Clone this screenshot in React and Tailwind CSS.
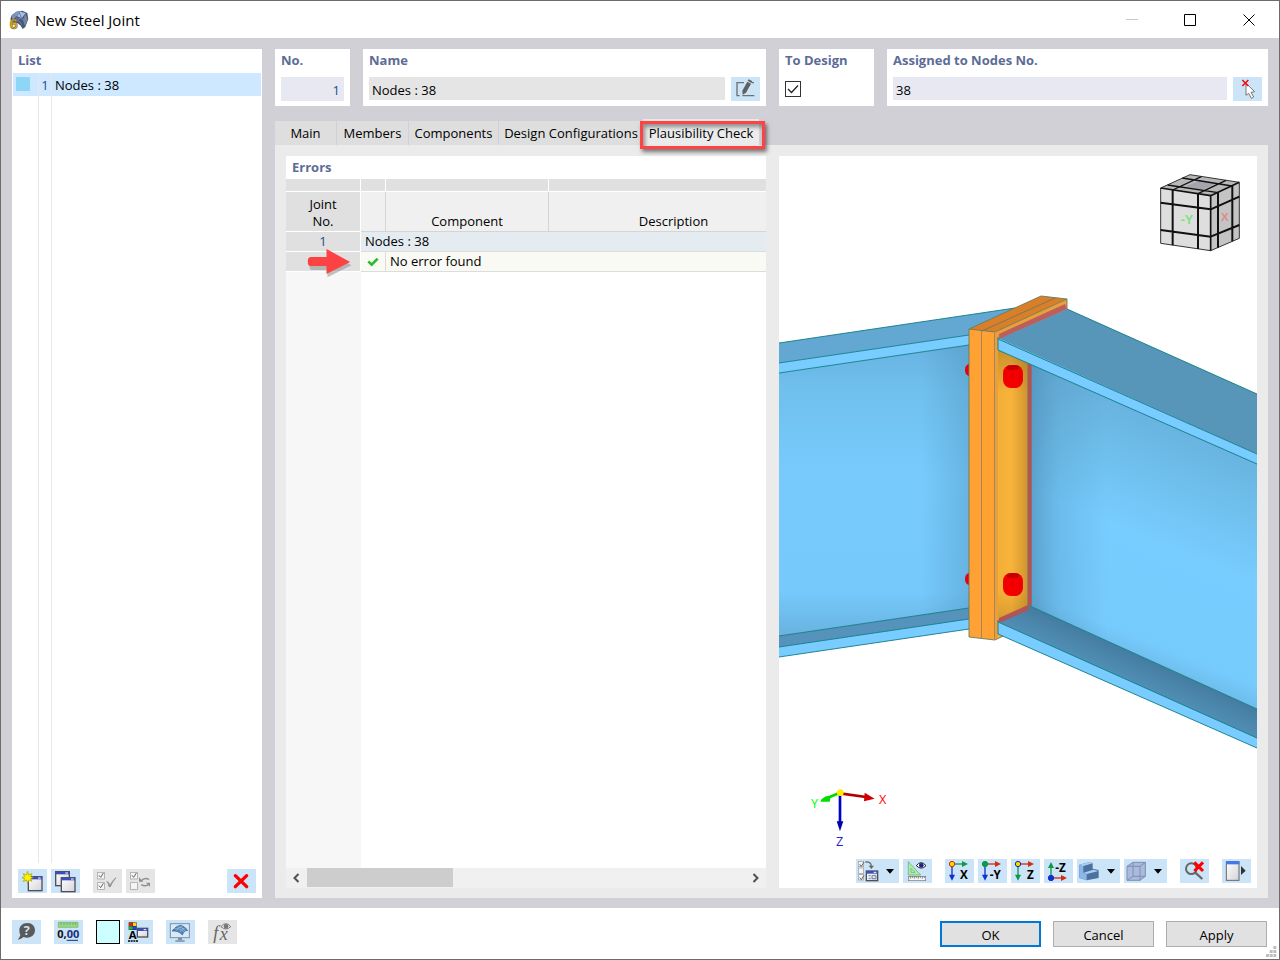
import { useState } from "react";

const tabs = [
  { name: "Main", width: "w-[62px]" },
  { name: "Members", width: "w-[72px]" },
  { name: "Components", width: "w-[90px]" },
  { name: "Design Configurations", width: "w-[144px]" },
  { name: "Plausibility Check", width: "w-[116px]" },
];

function Icon({ children, wide }) {
  return (
    <svg viewBox={wide ? "0 0 129 72" : "0 0 87 72"} className={wide ? "block w-[43px] h-6" : "block w-[29px] h-6"} fill="none" aria-hidden="true">
      {children}
      {wide && <path d="M90 30h24l-12 14z" fill="#000" />}
    </svg>
  );
}

function IconButton({ label, wide, disabled, children }) {
  return (
    <button type="button" title={label} aria-label={label} disabled={disabled} className={`shrink-0 ${disabled ? "bg-[#e5e5e5]" : "bg-[#cce4f7]"}`}>
      <Icon wide={wide}>{children}</Icon>
    </button>
  );
}

function MiniWindow({ x, y, w = 41, h = 42 }) {
  return (
    <g>
      <rect x={x} y={y} width={w} height={h} fill="url(#paper)" stroke="#505058" strokeWidth="4" />
      <rect x={x} y={y} width={w} height="8" fill="#3c4fb8" />
      <path d={`M${x + w - 12} ${y + 4}h8`} stroke="#fff" strokeWidth="3" />
    </g>
  );
}

function TickBox({ x, y, checked, size = 20 }) {
  return (
    <g stroke="#9a9a9a" strokeWidth="3">
      <rect x={x} y={y} width={size} height={size} fill="#f4f4f4" strokeWidth="2" />
      {checked && <path d={`M${x + 4} ${y + 9}l5 6 8-13`} stroke="#666" strokeWidth="3" />}
    </g>
  );
}

function Axes({ ox, oy, right, down, up, label, dot }) {
  return (
    <g>
      <path d={`M${ox} ${oy}h34`} stroke={right} strokeWidth="4" />
      <path d={`M${ox + 30} ${oy - 9}l18 9-18 9z`} fill={right} />
      <path d={up ? `M${ox} ${oy}v-34` : `M${ox} ${oy}v34`} stroke={down} strokeWidth="4" />
      <path d={up ? `M${ox - 9} ${oy - 30}l9-18 9 18z` : `M${ox - 9} ${oy + 32}l9 18 9-18z`} fill={down} />
      <circle cx={ox} cy={oy} r="8" fill={dot} stroke={dot === "#ffd800" ? (down === "#0a9a4a" ? "#1030d0" : "#d03010") : dot} strokeWidth="3" />
      <text x={up ? 34 : 68} y={up ? 40 : 59} textAnchor={up ? "start" : "end"} fontSize="35" fontWeight="bold" fill="#000" fontFamily="Open Sans">{label}</text>
    </g>
  );
}

function AppLogo() {
  return (
    <svg viewBox="0 0 60 60" className="w-5 h-5 overflow-visible" aria-hidden="true">
      <path d="M8 16L22 5l18-3 15 7 3 18-9 24-8 6-6-10-10-8-16-2-5-10z" fill="#48587a" />
      <path d="M8 16L22 5l16-2-14 14-13 12z" fill="#8298c2" />
      <path d="M34 5l16 4-12 16-14-6z" fill="#a9bde0" />
      <path d="M14 14l12 14 14-5M30 6l10 24 12-9M26 28l12 16" stroke="#6a81b0" strokeWidth="3" fill="none" />
      <path d="M49 11l7 16-8 22-6-19z" fill="#77849e" />
      <text x="2" y="56" fontSize="43" fontWeight="bold" fill="#dcb52a" stroke="#8b7012" strokeWidth="2" fontFamily="Liberation Sans">6</text>
    </svg>
  );
}

function TitleBar() {
  return (
    <header className="h-[37px] pl-2 flex items-center bg-white">
      <AppLogo />
      <h1 className="pl-[6px] text-[15px] leading-5 flex-1">New Steel Joint</h1>
      <button type="button" aria-label="Minimize" disabled className="w-[58px] h-9 flex items-center justify-center">
        <svg viewBox="0 0 12 12" className="w-3 h-3"><path d="M0 5.500h12" stroke="#c9c9c9" /></svg>
      </button>
      <button type="button" aria-label="Maximize" className="w-[58px] h-9 flex items-center justify-center">
        <svg viewBox="0 0 12 12" className="w-3 h-3"><path d="M.5.5h11v11H.5z" fill="none" stroke="#000" /></svg>
      </button>
      <button type="button" aria-label="Close" className="w-[60px] h-9 flex items-center justify-center">
        <svg viewBox="0 0 12 12" className="w-3 h-3"><path d="M.5.5l11 11M11.5.5l-11 11" stroke="#000" /></svg>
      </button>
    </header>
  );
}

function ListPanel() {
  return (
    <section className="w-[250px] shrink-0 bg-white flex flex-col">
      <h2 className="h-6 px-[6px] leading-[22px] font-bold text-[#5d6c96]">List</h2>
      <div className="flex-1 px-px flex flex-col">
        <div className="h-[23px] flex bg-[#cde8ff] leading-6">
          <span className="w-[26px] border-r border-[#e8e8e8] pl-[3px] pt-1"><span className="block w-[14px] h-[14px] bg-[#8ed6f5]" /></span>
          <span className="w-[13px] border-r border-[#e8e8e8] text-center text-[#1d4f86]">1</span>
          <span className="pl-[3px]">Nodes : 38</span>
        </div>
        <div className="flex-1 flex">
          <div className="w-[26px] border-r border-[#e8e8e8]" />
          <div className="w-[13px] border-r border-[#e8e8e8]" />
        </div>
      </div>
      <div className="flex px-[6px] pt-[6px] pb-[5px]">
        <div className="flex gap-1">
          <IconButton label="New">
            <MiniWindow x={31} y={23} />
            <path d="M29 7l3 11 10-4-4 9 8 2-8 4 4 8-9-4-4 9-4-9-9 5 4-9-8-3 8-3-4-9 9 4z" fill="#fff200" stroke="#a89a00" strokeWidth="2" />
          </IconButton>
          <IconButton label="Copy">
            <MiniWindow x={14} y={8} />
            <MiniWindow x={31} y={26} />
          </IconButton>
        </div>
        <div className="flex gap-1 ml-[13px] flex-1">
          <IconButton label="Select all" disabled>
            <TickBox x={14} y={10} checked />
            <TickBox x={14} y={41} checked />
            <path d="M41 37q8 3 10 12 5-13 18-23-12 15-17 27h-4q-1-9-7-16z" fill="#8e8e8e" stroke="#8e8e8e" strokeWidth="2" />
          </IconButton>
          <IconButton label="Invert selection" disabled>
            <TickBox x={14} y={10} checked />
            <TickBox x={14} y={41} />
            <path d="M45 36q10-12 24-5M70 44q-11 11-24 3" stroke="#8e8e8e" strokeWidth="4" />
            <path d="M39 25v13h13zM72 53V41H60z" fill="#8e8e8e" />
          </IconButton>
        </div>
        <IconButton label="Delete">
          <path d="M25 20l34 33M59 20L25 53" stroke="#f00" strokeWidth="10" strokeLinecap="round" />
        </IconButton>
      </div>
    </section>
  );
}

function Field({ label, id, className, children }) {
  return (
    <div className={`bg-white h-[57px] px-[6px] pb-[5px] flex flex-col ${className}`}>
      <label htmlFor={id} className="h-7 leading-[22px] font-bold text-[#5d6c96] whitespace-nowrap">{label}</label>
      <div className="flex items-start gap-[6px]">{children}</div>
    </div>
  );
}

function TopFields() {
  const [toDesign, setToDesign] = useState(true);
  return (
    <div className="grid grid-cols-[491fr_489fr] gap-[13px]">
      <div className="flex gap-[13px] min-w-0">
        <Field label="No." id="no" className="w-[75px]">
          <input id="no" type="text" defaultValue="1" className="w-full h-6 px-1 pt-[2px] text-right bg-[#e8e8f2] text-[#1d4f86]" />
        </Field>
        <Field label="Name" id="name" className="flex-1 min-w-0">
          <input id="name" type="text" readOnly value="Nodes : 38" className="flex-1 min-w-0 h-[23px] px-[3px] pt-[2px] bg-[#e5e5e5]" />
          <IconButton label="Edit name">
            <path d="M39 17H18v39h8M34 56h36M62 17h7" stroke="#707070" strokeWidth="4" />
            <path d="M34 41l15-27 11 6-15 27-10 6z" fill="#5f5f5f" />
            <path d="M50 11l3-4 11 6-3 5z" fill="#5f5f5f" />
          </IconButton>
        </Field>
      </div>
      <div className="flex gap-[13px] min-w-0">
        <Field label="To Design" id="to-design" className="w-[95px]">
          <span className="mt-1 grid">
            <input id="to-design" type="checkbox" checked={toDesign} onChange={(e) => setToDesign(e.target.checked)} className="appearance-none col-start-1 row-start-1 w-4 h-4 border border-[#333] bg-white" />
            {toDesign && (
              <svg viewBox="0 0 16 16" className="col-start-1 row-start-1 w-4 h-4 pointer-events-none"><path d="M3 8l3.500 3.500L13 4.500" fill="none" stroke="#222" strokeWidth="1.300" /></svg>
            )}
          </span>
        </Field>
        <Field label="Assigned to Nodes No." id="assigned" className="flex-1 min-w-0">
          <input id="assigned" type="text" defaultValue="38" className="flex-1 min-w-0 h-[23px] px-[3px] pt-[2px] bg-[#e8e8f2]" />
          <IconButton label="Select nodes in graphic">
            <path d="M39 19v36l8-6 8 15 7-4-8-14 11-2z" fill="#fff" stroke="#777" strokeWidth="3" />
            <path d="M28 9l18 18M46 9L28 27" stroke="#e11" strokeWidth="5" />
          </IconButton>
        </Field>
      </div>
    </div>
  );
}

function TabBar({ active, onSelect }) {
  return (
    <div role="tablist" className="relative flex items-end h-[26px] mt-[13px] w-fit">
      {tabs.map((tab, i) => (
        <button
          key={tab.name}
          type="button"
          role="tab"
          aria-selected={active === tab.name}
          onClick={() => onSelect(tab.name)}
          className={`whitespace-nowrap ${tab.width} ${active === tab.name ? "h-[26px] bg-[#ebebeb] pt-1" : "h-6 bg-[#dedede] pt-[2px]"} ${i < 3 ? "border-r border-[#d1d0d6]" : ""}`}
        >
          {tab.name}
        </button>
      ))}
      {/* highlight frame around the check tab */}
      <div className="absolute left-[365px] top-[2px] w-[125px] h-7 border-[3px] border-[#ff4242] shadow-[2px_3px_4px_rgba(0,0,0,0.5),inset_2px_3px_4px_rgba(0,0,0,0.4)] pointer-events-none" />
    </div>
  );
}

function ErrorsPanel() {
  return (
    <section className="bg-white min-w-0 flex flex-col">
      <h2 className="h-[23px] px-[6px] leading-[23px] font-bold text-[#5d6c96]">Errors</h2>
      <div className="flex-1 flex flex-col bg-[linear-gradient(to_right,#f7f7f7_75px,#fff_75px)]">
        <table className="w-full table-fixed border-separate border-spacing-0">
          <colgroup>
            <col className="w-[75px]" />
            <col className="w-[25px]" />
            <col className="w-[163px]" />
            <col />
          </colgroup>
          <thead>
            <tr className="h-[13px] bg-[#e0e0e0]" aria-hidden="true">
              <td className="p-0 border-r border-b border-white" />
              <td className="p-0 border-r border-b border-white" />
              <td className="p-0 border-r border-b border-white" />
              <td className="p-0 border-b border-white" />
            </tr>
            <tr className="h-10 align-bottom bg-[#f0f0f0] leading-[17px]">
              <th scope="col" className="font-normal p-0 pb-px bg-[#e0e0e0] border-r border-b border-white">Joint<br />No.</th>
              <th scope="col" aria-label="Status" className="p-0 border-r border-b border-[#d5d5d5]" />
              <th scope="col" className="font-normal p-0 pb-px border-r border-b border-[#d5d5d5]">Component</th>
              <th scope="col" className="font-normal p-0 pb-px border-b border-[#d5d5d5]"><span className="pl-8">Description</span></th>
            </tr>
          </thead>
          <tbody className="leading-[19px]">
            <tr className="h-5 bg-[#e4ecf2]">
              <td className="p-0 text-center text-[#1d4f86] bg-[#e0e0e0] border-r border-b border-white">1</td>
              <td colSpan="3" className="p-0 pl-1 border-b border-[#dcdcdc]">Nodes : 38</td>
            </tr>
            <tr className="h-5 bg-[#f9faf4]">
              <td className="p-0 bg-[#e0e0e0] border-r border-b border-white">
                <div className="relative">
                  <svg viewBox="0 0 140 96" className="absolute left-5 -top-[14px] w-[47px] h-8">
                    <path d="M10 44q0-10 10-10h44V13l72 39-72 36V66H20q-10 0-10-10z" fill="#888" opacity=".5" />
                    <path d="M5 38q0-11 10-11h46V3l71 39-71 36V54H15Q5 54 5 44z" fill="#fc4242" />
                  </svg>
                </div>
              </td>
              <td className="p-0 border-r border-b border-[#dcdcdc]">
                <svg viewBox="0 0 36 30" className="mx-auto w-3 h-[10px]" role="img" aria-label="OK"><path d="M4 13l10 10L32 5" fill="none" stroke="#2fb82f" strokeWidth="8" /></svg>
              </td>
              <td colSpan="2" className="p-0 pl-1 border-b border-[#dcdcdc]">No error found</td>
            </tr>
          </tbody>
        </table>
      </div>
      <div className="h-5 bg-[#f0f0f0] flex">
        <button type="button" aria-label="Scroll left" className="w-[21px] h-5 flex items-center justify-center">
          <svg viewBox="0 0 8 10" className="w-2 h-[10px]"><path d="M5.500 1l-4 4 4 4" fill="none" stroke="#505050" strokeWidth="2" /></svg>
        </button>
        <div className="flex-1 h-[19px]"><div className="w-1/3 h-full bg-[#cdcdcd]" /></div>
        <button type="button" aria-label="Scroll right" className="w-[21px] h-5 flex items-center justify-center">
          <svg viewBox="0 0 8 10" className="w-2 h-[10px]"><path d="M1.500 1l4 4-4 4" fill="none" stroke="#505050" strokeWidth="2" /></svg>
        </button>
      </div>
    </section>
  );
}

function JointModel() {
  return (
    <svg viewBox="779 156 478 732" preserveAspectRatio="xMidYMid slice" className="absolute inset-0 w-full h-full" role="img" aria-label="Steel joint model">
      <defs>
        <linearGradient id="webLeft" x1="0" y1="0" x2="0" y2="1">
          <stop offset="0" stopColor="#68b2e0" /><stop offset=".16" stopColor="#70c0ee" /><stop offset=".45" stopColor="#77cbfc" />
          <stop offset=".85" stopColor="#75c9fb" /><stop offset="1" stopColor="#68b2e0" />
        </linearGradient>
        <linearGradient id="fadeLeft" x1="0" y1="0" x2="1" y2="0">
          <stop offset=".75" stopColor="#4b8ab2" stopOpacity="0" /><stop offset="1" stopColor="#4b8ab2" stopOpacity=".35" />
        </linearGradient>
        <linearGradient id="webRight" gradientUnits="userSpaceOnUse" x1="1160" y1="415" x2="1070" y2="635">
          <stop offset="0" stopColor="#68b2de" /><stop offset=".25" stopColor="#70c0ed" /><stop offset=".5" stopColor="#77cdff" /><stop offset=".9" stopColor="#76cbfd" /><stop offset="1" stopColor="#6ebbe9" />
        </linearGradient>
        <linearGradient id="fadeRight" x1="0" y1="0" x2="1" y2="0">
          <stop offset="0" stopColor="#4685ad" stopOpacity=".6" /><stop offset=".13" stopColor="#4b8ab2" stopOpacity=".25" /><stop offset=".34" stopColor="#4b8ab2" stopOpacity="0" />
        </linearGradient>
        <linearGradient id="lowerFlange" gradientUnits="userSpaceOnUse" x1="1140" y1="654" x2="1126" y2="685">
          <stop offset="0" stopColor="#447ba0" /><stop offset="1" stopColor="#5392b8" />
        </linearGradient>
        <linearGradient id="plateFace" x1="0" y1="0" x2="1" y2="0">
          <stop offset="0" stopColor="#f3ae38" /><stop offset=".45" stopColor="#f8b33b" /><stop offset="1" stopColor="#c98f2c" />
        </linearGradient>
        <linearGradient id="plateShade" x1="0" y1="0" x2="0" y2="1">
          <stop offset="0" stopColor="#8a6417" stopOpacity=".55" /><stop offset=".2" stopColor="#8a6417" stopOpacity="0" /><stop offset=".88" stopColor="#8a6417" stopOpacity="0" /><stop offset="1" stopColor="#8a6417" stopOpacity=".35" />
        </linearGradient>
      </defs>

      {/* left beam */}
      <path d="M779 373l190-28v263l-190 28z" fill="url(#webLeft)" />
      <path d="M779 373l190-28v263l-190 28z" fill="url(#fadeLeft)" />
      <path d="M779 343l236-35-20 24-26 3-190 28z" fill="#62a8d3" />
      <path d="M779 363l190-28v10l-190 28zM779 647l190-28v10l-190 28z" fill="#78ccff" />
      <path d="M779 636l190-28v11l-190 28z" fill="#5593bc" />
      <path d="M779 343l236-35M779 363l190-28M779 373l190-28M779 636l190-28M779 647l190-28M779 657l190-28" fill="none" stroke="#0f7c85" strokeWidth=".9" />
      <path d="M969 364q-4 1-4 6t4 6zM969 573q-4 1-4 6t4 6z" fill="#e60010" />

      {/* right beam web */}
      <path d="M1030 358l227 105v246l-227-103z" fill="url(#webRight)" />
      <path d="M1030 358l227 105v246l-227-103z" fill="url(#fadeRight)" />

      {/* end plates */}
      <path d="M995 332l36-5v279l-27 30-9 4z" fill="url(#plateFace)" />
      <path d="M995 340l36-5v271l-36 20z" fill="url(#plateShade)" />
      <path d="M1028 350h4v255l-4 2z" fill="#b0545a" />
      <path d="M1031.500 360v246M1027.500 360v246" stroke="#8a7a60" strokeWidth=".7" />
      <path d="M969 329l26 3v308l-26-3z" fill="#ffa233" />
      <path d="M969 329l72-33 26 3-72 33z" fill="#da7f28" />
      <path d="M995 332l72-33v11l-69 31v296l-3 3z" fill="#e9a036" />
      <path d="M981.500 331v307M994.500 333v306" stroke="#a58463" strokeWidth="1" />
      <path d="M982 331l73-33M969 329v308l26 3 8-4M969 329l72-33 26 3v10M969 329l26 3 72-33" fill="none" stroke="#687c60" strokeWidth=".9" />

      {/* right beam flanges and welds */}
      <path d="M998 339l69-30 190 85v60z" fill="#5795b9" />
      <path d="M998 622l32-16 227 103v30z" fill="url(#lowerFlange)" />
      <path d="M998 338l259 116v10L998 350zM998 622l259 116v10L998 634z" fill="#78ccff" />
      <path d="M1067 309l190 85M998 339l259 115M998 350l259 114M998 622l259 116M998 634l259 114M1030 606l227 103M998 337v13M998 620v14" fill="none" stroke="#0f7c85" strokeWidth=".9" />
      <path d="M999 334l66-30 2 5-68 30z" fill="#bd5e5e" />
      <path d="M999 618l29-13 1 5-30 13z" fill="#b0545a" />

      <g id="bolt">
        <rect x="1003" y="365" width="20" height="23" rx="8" fill="#f40000" />
        <path d="M1007 366q6-2 12 0v3q-6 2-12 0z" fill="#c40000" />
        <path d="M1006 371v11M1012 373v6M1020 371v11" stroke="#d40000" strokeWidth="1" />
      </g>
      <use href="#bolt" y="208" />

      {/* view cube */}
      <g transform="translate(1140 160) scale(.3333)" strokeLinejoin="round">
        <path d="M62 84l150 23v165L62 250z" fill="#dedede" />
        <path d="M212 107l86-40v168l-86 37z" fill="#c4c4c4" />
        <path d="M62 84l88-40 148 23-86 40z" fill="#b8b8b8" />
        <path d="M137 79l42-16 48 8-42 19z" fill="#a5a5ae" />
        <path d="M62 84v166l150 22 86-37V67L150 44z" fill="none" stroke="#333" strokeWidth="3" />
        <path d="M62 84l150 23v165M212 107l86-40" fill="none" stroke="#111" strokeWidth="5" />
        <path d="M98 90v166M174 101v166M62 128l150 20M62 210l150 20M212 148l86-38M212 230l86-35M234 97v166M277 77v167" fill="none" stroke="#111" strokeWidth="6" />
        <path d="M83 75l151 23M127 54l149 24M98 90l86-40M174 101l84-40" fill="none" stroke="#111" strokeWidth="4" />
        <text x="122" y="193" fontSize="38" fontWeight="bold" fill="#7fe27f" fontFamily="Liberation Sans">-Y</text>
        <text x="243" y="184" fontSize="34" fontWeight="bold" fill="#e08a8a" fontFamily="Liberation Sans">X</text>
      </g>

      {/* global axes */}
      <g transform="translate(790 770) scale(.3333)" fontFamily="Open Sans" fontSize="38">
        <path d="M150 70l78 11" stroke="#b00000" strokeWidth="8" />
        <path d="M224 68l30 18-32 8z" fill="#d00000" />
        <path d="M150 70v86" stroke="#0000c8" strokeWidth="8" />
        <path d="M140 154h20l-10 30z" fill="#0000a8" />
        <path d="M146 70l-34 14" stroke="#00d800" strokeWidth="8" />
        <path d="M116 77q8 8 3 18l-28 0q4-14 25-18z" fill="#00e000" />
        <circle cx="151" cy="68" r="10" fill="#ffee00" />
        <text x="267" y="102" fill="#f00">X</text>
        <text x="63" y="115" fill="#0f0">Y</text>
        <text x="138" y="227" fill="#2222d0">Z</text>
      </g>
    </svg>
  );
}

function ViewToolbar() {
  return (
    <div className="relative flex flex-wrap justify-end gap-1 pr-[6px] pb-[5px]">
      <IconButton label="Display options" wide>
        <TickBox x={7} y={7} checked size={16} />
        <TickBox x={7} y={27} size={16} />
        <TickBox x={7} y={47} checked size={16} />
        <path d="M28 9q18-2 18 14" stroke="#666" strokeWidth="4" />
        <path d="M38 20h16l-8 10z" fill="#666" />
        <MiniWindow x={31} y={36} w={34} h={29} />
        <path d="M38 50h6M38 58h6M48 50h12v9H48z" stroke="#7080b0" strokeWidth="3" />
      </IconButton>
      <IconButton label="Show dimensions">
        <path d="M16 8v40h37z" fill="#a8f0a8" stroke="#60a060" strokeWidth="2" />
        <path d="M24 28v12h12z" fill="#cce4f7" stroke="#60a060" strokeWidth="2" />
        <rect x="16" y="52" width="52" height="13" fill="#f5f5f5" stroke="#777" strokeWidth="2" />
        <path d="M22 52v7M28 52v5M34 52v7M40 52v5M46 52v7M52 52v5M58 52v7M64 52v5" stroke="#555" strokeWidth="2" />
        <path d="M40 20q14-18 29 0-14 15-29 0z" fill="#fff" stroke="#222" strokeWidth="3" />
        <circle cx="55" cy="19" r="7" fill="#20208a" />
      </IconButton>
      <div className="flex gap-1 ml-[9px]">
        <IconButton label="View in X"><Axes ox={21} oy={15} right="#0a9a4a" down="#1030d0" dot="#ffd800" label="X" /></IconButton>
        <IconButton label="View against Y"><Axes ox={21} oy={15} right="#d03010" down="#1030d0" dot="#0a9a4a" label="-Y" /></IconButton>
        <IconButton label="View in Z"><Axes ox={21} oy={15} right="#d03010" down="#0a9a4a" dot="#ffd800" label="Z" /></IconButton>
        <IconButton label="View against Z"><Axes ox={21} oy={57} up right="#d03010" down="#0a9a4a" dot="#1030d0" label="-Z" /></IconButton>
      </div>
      <IconButton label="Rendering mode" wide>
        <path d="M7 17l32-8 8 4v16l18 4v24l-36 7L7 57z" fill="#4c70a0" />
        <path d="M7 17l32-8 8 4-30 9zM20 41l29-9 16 4-36 9z" fill="#a9d0f0" />
        <path d="M7 17l12 5v19l10 4v19L7 57z" fill="#8ab6e8" />
      </IconButton>
      <IconButton label="Transparency" wide>
        <path d="M9 22l18-12h37v42L48 64H9z" fill="#a9badc" />
        <path d="M9 22h39v42H9zM9 22l18-12h37L48 22M64 10v42L48 64M27 10v42h37M27 52L9 64" stroke="#7f8db0" strokeWidth="3" />
      </IconButton>
      <div className="flex gap-[13px] ml-[9px]">
        <IconButton label="Reset zoom">
          <circle cx="34" cy="29" r="16" stroke="#666" strokeWidth="6" />
          <path d="M45 40l22 20" stroke="#666" strokeWidth="7" />
          <path d="M43 10l26 26M69 10L43 36" stroke="#f00" strokeWidth="9" />
        </IconButton>
        <IconButton label="Detach window">
          <rect x="13" y="8" width="38" height="56" fill="url(#paper)" stroke="#666" strokeWidth="3" />
          <path d="M12 7h40v9H12z" fill="#3f78f0" />
          <path d="M57 21l14 14-14 13z" fill="#333" />
        </IconButton>
      </div>
    </div>
  );
}

function Footer() {
  return (
    <footer className="h-[51px] pl-[11px] pr-3 pt-3 flex items-start justify-between bg-white relative">
      <div className="flex gap-[13px]">
        <IconButton label="Help">
          <path d="M46 9c15 0 23 10 23 22S60 53 45 53q-6 0-10-2-7 7-18 8 7-7 8-14-3-6-3-14C22 19 31 9 46 9z" fill="#5a5a5a" />
          <text x="35" y="46" fontSize="38" fontWeight="bold" fill="#cce4f7" fontFamily="Open Sans">?</text>
        </IconButton>
        <IconButton label="Units and decimal places">
          <path d="M13 7h59v15H13z" fill="#9ad68a" stroke="#6db45c" strokeWidth="2" />
          <path d="M21 7v8M30 7v8M39 7v8M48 7v8M57 7v8M65 7v8" stroke="#5c9c4c" strokeWidth="2" />
          <text x="10" y="55" fontSize="33" fontWeight="bold" fill="#111" fontFamily="Open Sans">0,<tspan fill="#16307c">00</tspan></text>
          <path d="M38 61h34" stroke="#16307c" strokeWidth="3" />
        </IconButton>
        <div className="flex gap-1">
          <button type="button" title="Color" aria-label="Color" className="w-6 h-6 bg-[#ccffff] border border-black" />
          <IconButton label="Display properties">
            <path d="M14 7h24v23H14z" fill="#222" />
            <path d="M15 8h11v10H15z" fill="#f01818" /><path d="M27 8h10v10H27z" fill="#ffd800" /><path d="M15 19h11v10H15z" fill="#10c030" /><path d="M27 19h10v10H27z" fill="#2040f0" />
            <text x="14" y="56" fontSize="34" fontWeight="bold" fill="#000" fontFamily="Open Sans">A</text>
            <path d="M12 63h30" stroke="#000" strokeWidth="5" strokeDasharray="6 2" />
            <MiniWindow x={40} y={25} w={31} h={26} />
          </IconButton>
        </div>
        <IconButton label="Graphic display">
          <rect x="13" y="11" width="57" height="42" fill="#d8e9f8" stroke="#7b8fa8" strokeWidth="3" />
          <path d="M36 53h12v7H36zM28 61h28v4H28z" fill="#7b8fa8" />
          <path d="M18 33q13-17 26-17 13 2 21 16-9-3-16 13-12-14-31-12z" fill="#4f87bd" stroke="#39597c" strokeWidth="2" />
          <path d="M25 26q19-2 31 12M33 20q16 0 27 15M31 32q7-12 21-14M41 37q6-12 17-14" stroke="#a4c4e4" strokeWidth="2" />
        </IconButton>
        <IconButton label="Formula" disabled>
          <text x="16" y="56" fontSize="54" fontStyle="italic" fill="#666" fontFamily="Liberation Serif">f</text>
          <text x="35" y="60" fontSize="54" fontStyle="italic" fill="#666" fontFamily="Liberation Serif">x</text>
          <path d="M39 20q14-18 29 0-14 14-29 0z" fill="#eee" stroke="#777" strokeWidth="3" />
          <circle cx="54" cy="19" r="7" fill="#777" />
        </IconButton>
      </div>
      <div className="flex gap-3 pt-px">
        <button type="button" className="w-[101px] h-[26px] pt-[2px] leading-5 flex items-center justify-center bg-[#e1e1e1] border-2 border-[#0078d7]">OK</button>
        <button type="button" className="w-[101px] h-[26px] pt-[2px] leading-5 flex items-center justify-center bg-[#e1e1e1] border border-[#adadad]">Cancel</button>
        <button type="button" className="w-[101px] h-[26px] pt-[2px] leading-5 flex items-center justify-center bg-[#e1e1e1] border border-[#adadad]">Apply</button>
      </div>
      <svg viewBox="0 0 33 33" className="absolute right-[2px] bottom-[2px] w-[11px] h-[11px]" aria-hidden="true">
        <path d="M22 0h9v9h-9zM11 12h9v9h-9zM22 12h9v9h-9zM0 24h9v9H0zM11 24h9v9h-9zM22 24h9v9h-9z" fill="#bfbfbf" />
      </svg>
    </footer>
  );
}

export default function App() {
  const [activeTab, setActiveTab] = useState("Plausibility Check");

  return (
    <div className="min-h-screen flex flex-col border border-[#6b6b6d] bg-white text-black text-[13px] font-['Open_Sans','Noto_Sans',sans-serif]">
      <svg className="absolute w-0 h-0" aria-hidden="true">
        <linearGradient id="paper" x1="0" y1="0" x2="1" y2="1"><stop offset="0" stopColor="#fff" /><stop offset="1" stopColor="#d4d4d8" /></linearGradient>
      </svg>
      <TitleBar />
      <main className="flex-1 flex gap-[13px] px-[11px] pt-[11px] pb-[10px] bg-[#d1d0d6]">
        <ListPanel />
        <div className="flex-1 min-w-0 flex flex-col">
          <TopFields />
          <TabBar active={activeTab} onSelect={setActiveTab} />
          <div className="flex-1 grid grid-cols-[480fr_478fr] gap-[13px] px-[11px] pt-[11px] pb-[10px] bg-[#ebebeb]">
            <ErrorsPanel />
            <section className="relative min-w-0 bg-white overflow-hidden flex flex-col justify-end">
              <JointModel />
              <ViewToolbar />
            </section>
          </div>
        </div>
      </main>
      <Footer />
    </div>
  );
}
